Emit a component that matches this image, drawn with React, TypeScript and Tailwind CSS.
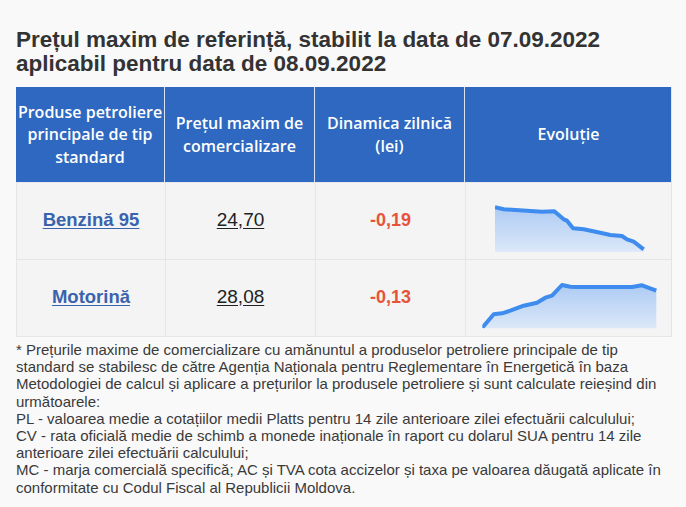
import React from "react";

type Pt = [number, number];

interface Fuel {
  name: string;
  price: string;
  change: string;
  points: Pt[];
  bottom: number;
}

const fuels: Fuel[] = [
  {
    name: "Benzină 95",
    price: "24,70",
    change: "-0,19",
    bottom: 69.7,
    points: [
      [29, 25.3], [37.7, 27.3], [61, 28.7], [76, 29.7], [88.3, 29.3], [92.7, 33],
      [97.7, 37.3], [101, 38.7], [107, 46.3], [117.7, 47.3], [134.3, 50.7],
      [144.3, 53], [156, 54], [161, 57.3], [167.7, 59.7], [177.7, 67.3],
    ],
  },
  {
    name: "Motorină",
    price: "28,08",
    change: "-0,13",
    bottom: 69.3,
    points: [
      [16.3, 68.7], [27.7, 55.3], [36, 54.3], [44.3, 51.7], [57.7, 46.7], [71, 43.7],
      [79.3, 38.7], [86, 36.7], [96, 26], [104.3, 27.7], [111, 28], [166, 28],
      [176, 26.3], [190.3, 31.7],
    ],
  },
];

function Sparkline({ points, bottom, id }: { points: Pt[]; bottom: number; id: string }) {
  const line = points.map(([x, y]) => `${x},${y}`).join(" ");
  const first = points[0];
  const last = points[points.length - 1];
  const area = `${first[0]},${bottom} ${line} ${last[0]},${bottom}`;
  return (
    <svg width="207" height="77" viewBox="0 0 207 77" className="block">
      <defs>
        <linearGradient id={`g-${id}`} x1="0" y1="0" x2="0" y2="1">
          <stop offset="0%" stopColor="#aecbf4" />
          <stop offset="100%" stopColor="#dbe8f8" />
        </linearGradient>
        <clipPath id={`c-${id}`}>
          <rect x={first[0]} y="0" width={last[0] - first[0] + 2} height={bottom} />
        </clipPath>
      </defs>
      <polygon points={area} fill={`url(#g-${id})`} />
      <polyline
        points={line}
        fill="none"
        stroke="#3f8cef"
        strokeWidth="4"
        strokeLinejoin="round"
        clipPath={`url(#c-${id})`}
      />
    </svg>
  );
}

export default function App() {
  return (
    <div className="min-h-[507px] w-[686px] bg-[#f9f9f9] pl-[16px] pt-[28px] font-['Liberation_Sans',Arial,sans-serif] text-[#333]">
      <h1 className="text-[22.5px] font-bold leading-[24px] text-[#333]">
        Prețul maxim de referință, stabilit la data de 07.09.2022
        <br />
        aplicabil pentru data de 08.09.2022
      </h1>

      <div className="mt-[11px] w-[656px] border-r border-[#e4e4e4]">
        {/* Header */}
        <div className="grid h-[95px] grid-cols-[149px_150px_150px_207px] bg-[#2e68c0] font-['Open_Sans',sans-serif] text-[16px] font-semibold leading-[22.5px] text-white">
          <div className="flex items-center justify-center border-r border-[#dbe4f4] px-[1px] text-center">
            Produse petroliere principale de tip standard
          </div>
          <div className="flex items-center justify-center border-r border-[#dbe4f4] px-2 text-center">
            Prețul maxim de comercializare
          </div>
          <div className="flex items-center justify-center border-r border-[#dbe4f4] px-2 text-center">
            Dinamica zilnică (lei)
          </div>
          <div className="flex items-center justify-center text-center">Evoluție</div>
        </div>
        <div className="h-[1px] bg-[#e8e8ee]" />

        {/* Rows */}
        {fuels.map((f, i) => (
          <div
            key={f.name}
            className="grid h-[77px] grid-cols-[149px_150px_150px_207px] border-b border-l border-[#e6e6e6] bg-[#f4f4f4]"
          >
            <div className="flex items-center justify-center border-r border-[#e6e6e6] pb-[2px]">
              <a href="#" className="text-[18.5px] font-bold text-[#3a63ae] underline underline-offset-2">
                {f.name}
              </a>
            </div>
            <div className="flex items-center justify-center border-r border-[#e6e6e6] pb-[2px]">
              <span className="text-[19px] text-[#222] underline underline-offset-2">{f.price}</span>
            </div>
            <div className="flex items-center justify-center border-r border-[#e6e6e6] pb-[2px]">
              <span className="text-[18px] font-bold text-[#e6533a]">{f.change}</span>
            </div>
            <div className="relative -mt-[1px]">
              <Sparkline points={f.points} bottom={f.bottom} id={`s${i}`} />
            </div>
          </div>
        ))}
      </div>

      <p className="mt-[4px] w-[656px] pb-4 text-[15px] leading-[17.2px] text-[#3a3a3a]">
        * Prețurile maxime de comercializare cu amănuntul a produselor petroliere principale de tip
        standard se stabilesc de către Agenția Naționala pentru Reglementare în Energetică în baza
        Metodologiei de calcul și aplicare a prețurilor la produsele petroliere și sunt calculate
        reieșind din următoarele:
        <br />
        PL - valoarea medie a cotațiilor medii Platts pentru 14 zile anterioare zilei efectuării
        calculului;
        <br />
        CV - rata oficială medie de schimb a monede inaționale în raport cu dolarul SUA pentru 14 zile
        anterioare zilei efectuării calculului;
        <br />
        MC - marja comercială specifică; AC și TVA cota accizelor și taxa pe valoarea dăugată aplicate
        în conformitate cu Codul Fiscal al Republicii Moldova.
      </p>
    </div>
  );
}
